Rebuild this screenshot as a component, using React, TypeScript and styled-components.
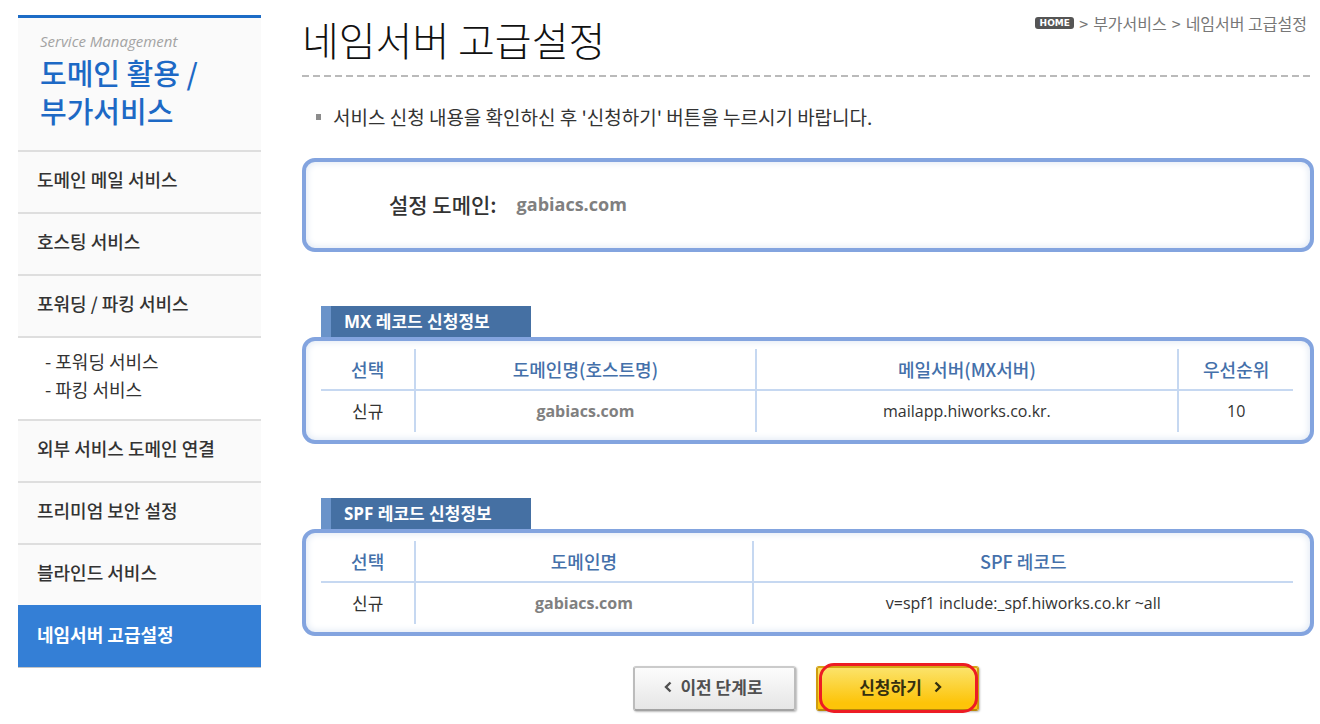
import React from "react";
import styled, { createGlobalStyle } from "styled-components";

const korean = `"Noto Sans CJK KR", sans-serif`;
const mixed = `"Open Sans", "Noto Sans CJK KR", sans-serif`;

const GlobalStyle = createGlobalStyle`
  *, *::before, *::after { box-sizing: border-box; }
  body { margin: 0; background: #fff; color: #333; font-family: ${korean}; font-size: 18px; }
  h1, h2, p, ul, dl, dd { margin: 0; padding: 0; }
  ul { list-style: none; }
  a { color: inherit; text-decoration: none; }
`;

const Page = styled.div`
  display: grid;
  grid-template-columns: 243px minmax(0, 1fr);
  column-gap: 41px;
  align-items: start;
  padding: 15px 6px 8px 18px;
`;

const Sidebar = styled.nav`
  border-top: 3px solid #1d6cc6;
  border-bottom: 1px solid #c4c4c4;
  background: #fafafa;
`;

const SidebarHead = styled.div`
  height: 132px;
  padding: 11px 22px 0;
`;

const Eyebrow = styled.p`
  font: italic 15px/24px "Open Sans", sans-serif;
  color: #a3a3a3;
`;

const SidebarTitle = styled.h2`
  font-size: 29px;
  line-height: 38px;
  font-weight: 500;
  color: #1d69c5;
`;

const MenuLink = styled.a<{ $active?: boolean }>`
  display: flex;
  align-items: center;
  height: 62px;
  padding: 0 0 7px 19px;
  border-top: 2px solid ${(p) => (p.$active ? "#347fd6" : "#dedede")};
  background: ${(p) => (p.$active ? "#347fd6" : "transparent")};
  color: ${(p) => (p.$active ? "#fff" : "#333")};
  font-weight: ${(p) => (p.$active ? 700 : 500)};
`;

const SubMenu = styled.ul`
  height: 83px;
  padding: 9px 0 0 27px;
  border-top: 2px solid #dedede;
  background: #fff;
  line-height: 28px;
`;

const Main = styled.main`
  display: flex;
  flex-direction: column;
`;

const Header = styled.header`
  display: flex;
  justify-content: space-between;
  align-items: flex-start;
  height: 62px;
  padding-right: 7px;
  background: repeating-linear-gradient(90deg, #bababa 0 7px, transparent 7px 11px) bottom / 100% 2px no-repeat;
`;

const Title = styled.h1`
  font-size: 40px;
  line-height: 48px;
  font-weight: 300;
  color: #111;
`;

const Crumbs = styled.nav`
  display: flex;
  align-items: center;
  gap: 5px;
  font-size: 16px;
  line-height: 16px;
  color: #777;
`;

const HomeBadge = styled.a`
  width: 39px;
  height: 12px;
  border-radius: 3px;
  background: #555;
  color: #fff;
  font: bold 9px/12px "DejaVu Sans", sans-serif;
  text-align: center;
`;

const Notice = styled.ul`
  padding: 26px 0 28px 14px;
`;

const NoticeItem = styled.li`
  display: flex;
  align-items: center;
  gap: 12px;
  font-size: 19px;
  line-height: 27px;
  &::before {
    content: "";
    width: 5px;
    height: 6px;
    background: #8c8c8c;
  }
`;

const Panel = styled.div`
  padding: 8px 17px 8px 15px;
  border: 4px solid #83a4df;
  border-radius: 13px;
  box-shadow: inset 0 0 7px 1px #dfe8f4;
`;

const DomainList = styled.dl`
  display: flex;
  align-items: center;
  gap: 20px;
  height: 70px;
  padding: 0 0 3px 68px;
  line-height: 28px;
`;

const DomainLabel = styled.dt`
  font-size: 21px;
  font-weight: 500;
`;

const DomainName = styled.span<{ $large?: boolean }>`
  font-family: "Open Sans", sans-serif;
  font-size: ${(p) => (p.$large ? 18 : 16)}px;
  font-weight: 700;
  color: #808080;
`;

const Value = styled.span`
  font-family: "Open Sans", sans-serif;
  font-size: 16px;
`;

const Section = styled.section`
  display: flex;
  flex-direction: column;
  align-items: stretch;
  margin-top: 54px;
`;

const TabTitle = styled.h2`
  align-self: flex-start;
  width: 210px;
  height: 31px;
  margin-left: 19px;
  padding-left: 13px;
  border-left: 10px solid #6a93c9;
  background: #4570a3;
  color: #fff;
  font-size: 17px;
  line-height: 31px;
  font-weight: 700;
  font-family: ${mixed};
`;

const RecordTable = styled.table`
  width: 100%;
  table-layout: fixed;
  border-collapse: separate;
  border-spacing: 0;
  text-align: center;

  th, td {
    padding: 0;
    line-height: 24px;
  }
  th {
    height: 42px;
    border-bottom: 2px solid #c6d8f1;
    color: #4470aa;
    font-size: 18px;
    font-weight: 500;
  }
  td {
    height: 41px;
    padding-bottom: 2px;
    font-size: 17px;
  }
  th + th, td + td {
    border-left: 2px solid #c6d8f1;
  }
`;

const Actions = styled.div`
  display: flex;
  justify-content: center;
  gap: 20px;
  margin-top: 30px;
  padding-right: 4px;
`;

const Button = styled.button<{ $primary?: boolean }>`
  position: relative;
  display: flex;
  justify-content: center;
  align-items: center;
  gap: ${(p) => (p.$primary ? 12 : 8)}px;
  width: 163px;
  height: 45px;
  padding: ${(p) => (p.$primary ? "0 0 4px 6px" : "0 2px 4px 0")};
  border: 2px solid;
  border-color: ${(p) => (p.$primary ? "#d5a414 #cf9d10 #b98808" : "#cbcbcb #bcbcbc #a3a3a3")};
  border-radius: 3px;
  background: ${(p) =>
    p.$primary ? "linear-gradient(#fbe36a, #fdc409 85%)" : "linear-gradient(#fcfcfc, #e6e6e6)"};
  box-shadow: 1px 1px 2px #bbb;
  color: ${(p) => (p.$primary ? "#35300f" : "#505050")};
  font: bold 17px/24px ${korean};
  cursor: pointer;
`;

const Highlight = styled.span`
  position: absolute;
  inset: -5px -1px -4px 1px;
  border: 3px solid #ed1c24;
  border-radius: 15px;
`;

const Chevron = ({ right }: { right?: boolean }) => (
  <svg width="8" height="12" viewBox="0 0 8 12" fill="none" stroke="currentColor" strokeWidth="2.4" aria-hidden="true">
    <path d={right ? "M1.5 1.5L6 6L1.5 10.5" : "M6.5 1.5L2 6L6.5 10.5"} />
  </svg>
);

type RecordProps = {
  title: string;
  widths: string[];
  heads: string[];
  cells: React.ReactNode[];
};

const RecordSection = ({ title, widths, heads, cells }: RecordProps) => (
  <Section>
    <TabTitle>{title}</TabTitle>
    <Panel>
      <RecordTable aria-label={title}>
        <colgroup>
          {widths.map((width, i) => (
            <col key={i} style={{ width }} />
          ))}
        </colgroup>
        <thead>
          <tr>
            {heads.map((head) => (
              <th key={head} scope="col">{head}</th>
            ))}
          </tr>
        </thead>
        <tbody>
          <tr>
            {cells.map((cell, i) => (
              <td key={i}>{cell}</td>
            ))}
          </tr>
        </tbody>
      </RecordTable>
    </Panel>
  </Section>
);

export default function App() {
  return (
    <>
      <GlobalStyle />
      <Page>
        <Sidebar>
          <SidebarHead>
            <Eyebrow>Service Management</Eyebrow>
            <SidebarTitle>
              도메인 활용 /<br />부가서비스
            </SidebarTitle>
          </SidebarHead>
          <ul>
            <li><MenuLink href="#mail">도메인 메일 서비스</MenuLink></li>
            <li><MenuLink href="#hosting">호스팅 서비스</MenuLink></li>
            <li>
              <MenuLink href="#forwarding-parking">포워딩 / 파킹 서비스</MenuLink>
              <SubMenu>
                <li><a href="#forwarding">- 포워딩 서비스</a></li>
                <li><a href="#parking">- 파킹 서비스</a></li>
              </SubMenu>
            </li>
            <li><MenuLink href="#connect">외부 서비스 도메인 연결</MenuLink></li>
            <li><MenuLink href="#security">프리미엄 보안 설정</MenuLink></li>
            <li><MenuLink href="#blind">블라인드 서비스</MenuLink></li>
            <li><MenuLink href="#nameserver" $active>네임서버 고급설정</MenuLink></li>
          </ul>
        </Sidebar>

        <Main>
          <Header>
            <Title>네임서버 고급설정</Title>
            <Crumbs>
              <HomeBadge href="#home">HOME</HomeBadge>
              <span>&gt;</span>
              <a href="#extra">부가서비스</a>
              <span>&gt;</span>
              <span>네임서버 고급설정</span>
            </Crumbs>
          </Header>

          <Notice>
            <NoticeItem>서비스 신청 내용을 확인하신 후 '신청하기' 버튼을 누르시기 바랍니다.</NoticeItem>
          </Notice>

          <Panel>
            <DomainList>
              <DomainLabel>설정 도메인:</DomainLabel>
              <dd><DomainName $large>gabiacs.com</DomainName></dd>
            </DomainList>
          </Panel>

          <RecordSection
            title="MX 레코드 신청정보"
            widths={["9.6%", "35%", "43.5%", "11.9%"]}
            heads={["선택", "도메인명(호스트명)", "메일서버(MX서버)", "우선순위"]}
            cells={[
              "신규",
              <DomainName>gabiacs.com</DomainName>,
              <Value>mailapp.hiworks.co.kr.</Value>,
              <Value>10</Value>,
            ]}
          />
          <RecordSection
            title="SPF 레코드 신청정보"
            widths={["9.6%", "34.7%", "55.7%"]}
            heads={["선택", "도메인명", "SPF 레코드"]}
            cells={[
              "신규",
              <DomainName>gabiacs.com</DomainName>,
              <Value>v=spf1 include:_spf.hiworks.co.kr ~all</Value>,
            ]}
          />

          <Actions>
            <Button type="button">
              <Chevron />
              이전 단계로
            </Button>
            <Button type="button" $primary>
              신청하기
              <Chevron right />
              <Highlight />
            </Button>
          </Actions>
        </Main>
      </Page>
    </>
  );
}
